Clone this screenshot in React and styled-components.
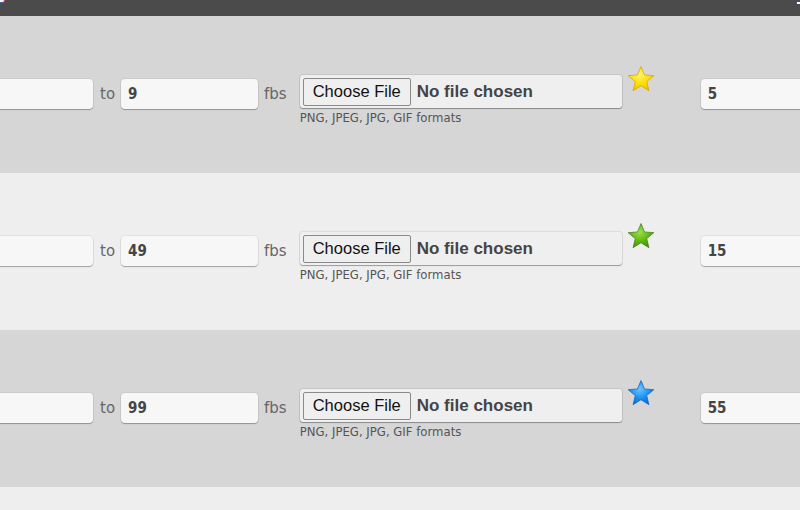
import React from "react";
import styled, { createGlobalStyle } from "styled-components";

const GlobalStyle = createGlobalStyle`
  html, body { margin: 0; padding: 0; background: #eeeeee; overflow: hidden; }
  * { box-sizing: border-box; }
`;

const Page = styled.div`
  width: 800px;
  height: 510px;
  overflow: hidden;
  font-family: "DejaVu Sans", Verdana, sans-serif;
`;

const TopBar = styled.div`
  position: relative;
  height: 16px;
  background: #4b4b4b;
`;

const CornerMark = styled.span`
  position: absolute;
  top: 0;
  left: 0;
  width: 5px;
  height: 3px;
  background: #f4f4f4;
  border-bottom-right-radius: 3px;
  border-right: 1px solid #c4473c;
  border-bottom: 1px solid #4a5bb0;
`;

const EdgeMark = styled.span`
  position: absolute;
  top: 2px;
  right: 0;
  width: 4px;
  height: 2px;
  background: #ffffff;
  border-left: 1px solid #3d4fb8;
`;

const Row = styled.div`
  height: 157px;
  background: ${(p) => (p.$alt ? "#eeeeee" : "#d6d6d6")};
  overflow: hidden;
`;

const Line = styled.div`
  display: flex;
  align-items: flex-start;
  margin-left: -44px;
  padding-top: 50px;
`;

const Field = styled.div`
  flex: none;
  width: 137px;
  height: 30px;
  margin-top: 13px;
  margin-left: ${(p) => p.$ml || 0}px;
  padding-left: 7px;
  display: flex;
  align-items: center;
  background: #f7f7f7;
  border-radius: 4px;
  box-shadow: 0 1px 1px rgba(0, 0, 0, 0.28), 0 0 0 1px rgba(0, 0, 0, 0.05);
  font-family: "DejaVu Sans Condensed", "Liberation Sans", Arial, sans-serif;
  font-stretch: condensed;
  font-weight: bold;
  font-size: 15px;
  color: #454545;
`;

const Label = styled.span`
  flex: none;
  margin-top: 13px;
  margin-left: ${(p) => p.$ml}px;
  line-height: 30px;
  font-size: 15px;
  color: #666666;
`;

const FileCol = styled.div`
  flex: none;
  margin-left: 13px;
  margin-top: 9px;
  display: flex;
  flex-direction: column;
`;

const FileBox = styled.div`
  width: 322px;
  height: 33px;
  padding-left: 3px;
  display: flex;
  align-items: center;
  background: #efefef;
  border-radius: 3px;
  box-shadow: 0 1px 1px rgba(0, 0, 0, 0.3), 0 0 0 1px rgba(0, 0, 0, 0.07);
`;

const ChooseButton = styled.span`
  height: 28px;
  padding: 0 9px;
  display: flex;
  align-items: center;
  background: #efefef;
  border: 1px solid #8a8a8a;
  border-radius: 2px;
  font-family: "Liberation Sans", Arial, sans-serif;
  font-size: 16.5px;
  color: #111111;
`;

const FileName = styled.span`
  margin-left: 6px;
  font-family: "Liberation Sans", Arial, sans-serif;
  font-weight: bold;
  font-size: 17px;
  color: #444444;
`;

const Hint = styled.span`
  margin-top: 3px;
  font-size: 11.7px;
  color: #555555;
`;

const StarBox = styled.div`
  flex: none;
  width: 30px;
  height: 28px;
  margin-left: 4px;
  margin-top: -1px;
`;

const STAR_POINTS =
  "14,1.5 17.41,9.6 26.36,10.3 19.52,16 21.64,24.8 14,20 6.36,24.8 8.48,16 1.64,10.3 10.59,9.6";

const STAR_COLORS = {
  gold: { light: "#fff36a", mid: "#ffdd00", dark: "#f2b800", stroke: "#d2a400" },
  green: { light: "#9be04a", mid: "#5fb80e", dark: "#3c8a00", stroke: "#437c18" },
  blue: { light: "#6cc4ff", mid: "#1a8ff2", dark: "#0a62d6", stroke: "#1360b8" },
};

function Star({ tone }) {
  const c = STAR_COLORS[tone];
  const id = `star-${tone}`;
  return (
    <StarBox>
      <svg width="30" height="28" viewBox="0 0 28 27">
        <defs>
          <radialGradient id={id} cx="0.45" cy="0.35" r="0.7">
            <stop offset="0" stopColor={c.light} />
            <stop offset="0.55" stopColor={c.mid} />
            <stop offset="1" stopColor={c.dark} />
          </radialGradient>
        </defs>
        <polygon
          points={STAR_POINTS}
          fill={`url(#${id})`}
          stroke={c.stroke}
          strokeWidth="0.7"
          strokeLinejoin="round"
        />
      </svg>
    </StarBox>
  );
}

const rows = [
  { to: "9", points: "5", tone: "gold", alt: false },
  { to: "49", points: "15", tone: "green", alt: true },
  { to: "99", points: "55", tone: "blue", alt: false },
];

export default function App() {
  return (
    <Page>
      <GlobalStyle />
      <TopBar>
        <CornerMark />
        <EdgeMark />
      </TopBar>
      {rows.map((r) => (
        <Row key={r.to} $alt={r.alt}>
          <Line>
            <Field />
            <Label $ml={7}>to</Label>
            <Field $ml={6}>{r.to}</Field>
            <Label $ml={6}>fbs</Label>
            <FileCol>
              <FileBox>
                <ChooseButton>Choose File</ChooseButton>
                <FileName>No file chosen</FileName>
              </FileBox>
              <Hint>PNG, JPEG, JPG, GIF formats</Hint>
            </FileCol>
            <Star tone={r.tone} />
            <Field $ml={45}>{r.points}</Field>
          </Line>
        </Row>
      ))}
      <Row $alt />
    </Page>
  );
}
